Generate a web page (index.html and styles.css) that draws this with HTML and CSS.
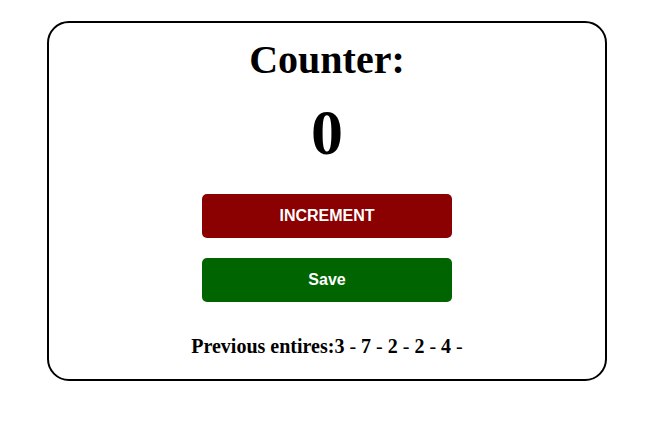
FILE: index.html
```html
<!DOCTYPE html>
<html>
<head>
<meta charset="utf-8">
<link rel="stylesheet" href="styles.css">
</head>
<body>
<div class="page">
  <div class="card">
    <h1 class="title">Counter:</h1>
    <div class="count">0</div>
    <button class="btn btn-inc">INCREMENT</button>
    <button class="btn btn-save">Save</button>
    <p class="entries"><span class="entries-label">Previous entires:</span><b>3</b> - <b>7</b> - <b>2</b> - <b>2</b> - <b>4</b> - </p>
  </div>
</div>
</body>
</html>
```
FILE: styles.css
```css
html, body {
  margin: 0;
  padding: 0;
  background: #fff;
}
.page {
  padding: 21px 0 0 47px;
}
.card {
  box-sizing: border-box;
  width: 560px;
  height: 360px;
  border: 2px solid #000;
  border-radius: 22px;
  display: flex;
  flex-direction: column;
  align-items: center;
  padding-top: 14px;
  font-family: "Liberation Serif", "Times New Roman", serif;
  color: #000;
}
.title {
  margin: 0;
  font-size: 40px;
  font-weight: bold;
  line-height: 46px;
}
.count {
  margin-top: 13px;
  font-size: 64px;
  font-weight: bold;
  line-height: 74px;
}
.btn {
  box-sizing: border-box;
  width: 250px;
  height: 44px;
  border: none;
  border-radius: 5px;
  color: #fff;
  font-family: "Liberation Sans", Arial, sans-serif;
  font-weight: bold;
  font-size: 16px;
  padding: 0;
}
.btn-inc {
  margin-top: 24px;
  background: #8b0000;
}
.btn-save {
  margin-top: 20px;
  background: #006400;
}
.entries {
  margin: 33px 0 0;
  font-size: 20px;
  font-weight: normal;
  line-height: 23px;
}
.entries-label {
  font-weight: bold;
}
```
